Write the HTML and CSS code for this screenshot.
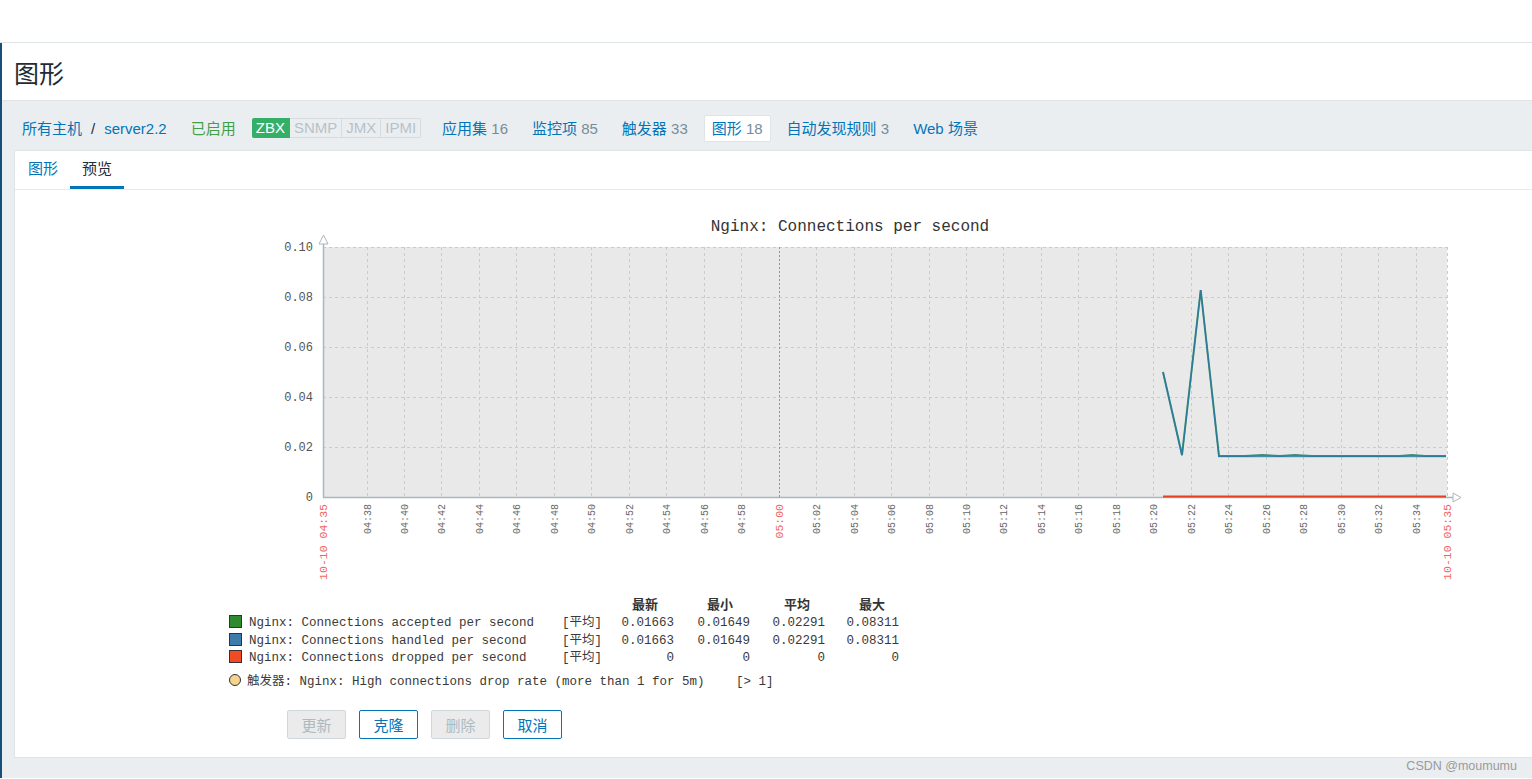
FILE: index.html
```html
<!DOCTYPE html>
<html lang="zh-CN">
<head>
<meta charset="utf-8">
<title>图形</title>
<link rel="stylesheet" href="styles.css">
</head>
<body>
<div class="topbar"></div>
<div class="main">
  <header class="page-header"><h1>图形</h1></header>
  <div class="content">
    <ul class="host-nav">
      <li class="crumbs"><a href="#">所有主机</a><span class="sep">/</span><a href="#">server2.2</a></li>
      <li class="status">已启用</li>
      <li class="badges"><span class="badge on">ZBX</span><span class="badge">SNMP</span><span class="badge">JMX</span><span class="badge">IPMI</span></li>
      <li><a href="#">应用集</a> <span class="count">16</span></li>
      <li><a href="#">监控项</a> <span class="count">85</span></li>
      <li><a href="#">触发器</a> <span class="count">33</span></li>
      <li class="selected"><a href="#">图形</a> <span class="count">18</span></li>
      <li><a href="#">自动发现规则</a> <span class="count">3</span></li>
      <li><a href="#">Web 场景</a></li>
    </ul>
    <div class="card">
      <ul class="tabs">
        <li><a href="#">图形</a></li>
        <li class="active"><a href="#">预览</a></li>
      </ul>
      <div class="graph">
        <svg class="chart" width="1260" height="500" viewBox="220 200 1260 500" xmlns="http://www.w3.org/2000/svg">
          <text class="c-title" x="850" y="231" text-anchor="middle">Nginx: Connections per second</text>
          <rect x="323" y="247" width="1124" height="250" fill="#e9e9e9"/>
          <g class="grid">
            <line x1="323" y1="247.5" x2="1447" y2="247.5"/>
            <line x1="323" y1="297.5" x2="1447" y2="297.5"/>
            <line x1="323" y1="347.5" x2="1447" y2="347.5"/>
            <line x1="323" y1="397.5" x2="1447" y2="397.5"/>
            <line x1="323" y1="447.5" x2="1447" y2="447.5"/>
            <line x1="367.5" y1="247" x2="367.5" y2="497"/>
            <line x1="404.5" y1="247" x2="404.5" y2="497"/>
            <line x1="441.5" y1="247" x2="441.5" y2="497"/>
            <line x1="479.5" y1="247" x2="479.5" y2="497"/>
            <line x1="516.5" y1="247" x2="516.5" y2="497"/>
            <line x1="554.5" y1="247" x2="554.5" y2="497"/>
            <line x1="591.5" y1="247" x2="591.5" y2="497"/>
            <line x1="629.5" y1="247" x2="629.5" y2="497"/>
            <line x1="666.5" y1="247" x2="666.5" y2="497"/>
            <line x1="704.5" y1="247" x2="704.5" y2="497"/>
            <line x1="741.5" y1="247" x2="741.5" y2="497"/>
            <line x1="816.5" y1="247" x2="816.5" y2="497"/>
            <line x1="854.5" y1="247" x2="854.5" y2="497"/>
            <line x1="891.5" y1="247" x2="891.5" y2="497"/>
            <line x1="929.5" y1="247" x2="929.5" y2="497"/>
            <line x1="966.5" y1="247" x2="966.5" y2="497"/>
            <line x1="1003.5" y1="247" x2="1003.5" y2="497"/>
            <line x1="1041.5" y1="247" x2="1041.5" y2="497"/>
            <line x1="1078.5" y1="247" x2="1078.5" y2="497"/>
            <line x1="1116.5" y1="247" x2="1116.5" y2="497"/>
            <line x1="1153.5" y1="247" x2="1153.5" y2="497"/>
            <line x1="1191.5" y1="247" x2="1191.5" y2="497"/>
            <line x1="1228.5" y1="247" x2="1228.5" y2="497"/>
            <line x1="1266.5" y1="247" x2="1266.5" y2="497"/>
            <line x1="1303.5" y1="247" x2="1303.5" y2="497"/>
            <line x1="1341.5" y1="247" x2="1341.5" y2="497"/>
            <line x1="1378.5" y1="247" x2="1378.5" y2="497"/>
            <line x1="1416.5" y1="247" x2="1416.5" y2="497"/>
            <line x1="1447.5" y1="247" x2="1447.5" y2="497"/>
          </g>
          <line class="grid-major" x1="779.5" y1="247" x2="779.5" y2="497"/>
          <g class="axis">
            <line x1="323.5" y1="240" x2="323.5" y2="497.5"/>
            <line x1="323" y1="497.5" x2="1454" y2="497.5"/>
            <polygon points="319,244 328,244 323.5,235" fill="#fff"/>
            <polygon points="1453,493 1453,502 1461,497.5" fill="#fff"/>
          </g>
          <g class="y-labels">
            <text x="313" y="251">0.10</text>
            <text x="313" y="301">0.08</text>
            <text x="313" y="351">0.06</text>
            <text x="313" y="401">0.04</text>
            <text x="313" y="451">0.02</text>
            <text x="313" y="501">0</text>
          </g>
          <g class="x-labels">
            <text transform="translate(371,504) rotate(-90)">04:38</text>
            <text transform="translate(408,504) rotate(-90)">04:40</text>
            <text transform="translate(445,504) rotate(-90)">04:42</text>
            <text transform="translate(483,504) rotate(-90)">04:44</text>
            <text transform="translate(520,504) rotate(-90)">04:46</text>
            <text transform="translate(558,504) rotate(-90)">04:48</text>
            <text transform="translate(595,504) rotate(-90)">04:50</text>
            <text transform="translate(633,504) rotate(-90)">04:52</text>
            <text transform="translate(670,504) rotate(-90)">04:54</text>
            <text transform="translate(708,504) rotate(-90)">04:56</text>
            <text transform="translate(745,504) rotate(-90)">04:58</text>
            <text transform="translate(820,504) rotate(-90)">05:02</text>
            <text transform="translate(858,504) rotate(-90)">05:04</text>
            <text transform="translate(895,504) rotate(-90)">05:06</text>
            <text transform="translate(933,504) rotate(-90)">05:08</text>
            <text transform="translate(970,504) rotate(-90)">05:10</text>
            <text transform="translate(1007,504) rotate(-90)">05:12</text>
            <text transform="translate(1045,504) rotate(-90)">05:14</text>
            <text transform="translate(1082,504) rotate(-90)">05:16</text>
            <text transform="translate(1120,504) rotate(-90)">05:18</text>
            <text transform="translate(1157,504) rotate(-90)">05:20</text>
            <text transform="translate(1195,504) rotate(-90)">05:22</text>
            <text transform="translate(1232,504) rotate(-90)">05:24</text>
            <text transform="translate(1270,504) rotate(-90)">05:26</text>
            <text transform="translate(1307,504) rotate(-90)">05:28</text>
            <text transform="translate(1345,504) rotate(-90)">05:30</text>
            <text transform="translate(1382,504) rotate(-90)">05:32</text>
            <text transform="translate(1420,504) rotate(-90)">05:34</text>
          </g>
          <g class="x-labels-red">
            <text transform="translate(327,504) rotate(-90)">10-10 04:35</text>
            <text transform="translate(783,504) rotate(-90)">05:00</text>
            <text transform="translate(1451,504) rotate(-90)">10-10 05:35</text>
          </g>
          <polyline class="line-red" points="1163,496.5 1446,496.5"/>
          <polyline class="line-green" points="1163,372 1182,455 1200.7,290 1219,456 1245,456 1262,455 1280,456 1295,455 1312,456 1400,456 1412,455 1425,456 1446,456"/>
          <polyline class="line-blue" points="1163,372 1182,455.5 1200.7,290 1219,456.5 1446,456.5"/>

          <g class="legend-head">
            <text x="645" y="609">最新</text>
            <text x="720" y="609">最小</text>
            <text x="797" y="609">平均</text>
            <text x="872" y="609">最大</text>
          </g>
          <rect class="sw" x="229.5" y="615.5" width="12" height="12" fill="#2d8a2e"/>
          <rect class="sw" x="229.5" y="633.5" width="12" height="12" fill="#3c7baa"/>
          <rect class="sw" x="229.5" y="650.5" width="12" height="12" fill="#f24a22"/>
          <g class="legend">
            <text x="249" y="626">Nginx: Connections accepted per second</text>
            <text x="249" y="644">Nginx: Connections handled per second</text>
            <text x="249" y="661">Nginx: Connections dropped per second</text>
            <text x="562" y="626">[平均]</text>
            <text x="562" y="644">[平均]</text>
            <text x="562" y="661">[平均]</text>
            <text x="247" y="685">触发器: Nginx: High connections drop rate (more than 1 for 5m)</text>
            <text x="736" y="685">[&gt; 1]</text>
          </g>
          <g class="legend num">
            <text x="674" y="626">0.01663</text>
            <text x="750" y="626">0.01649</text>
            <text x="825" y="626">0.02291</text>
            <text x="899" y="626">0.08311</text>
            <text x="674" y="644">0.01663</text>
            <text x="750" y="644">0.01649</text>
            <text x="825" y="644">0.02291</text>
            <text x="899" y="644">0.08311</text>
            <text x="674" y="661">0</text>
            <text x="750" y="661">0</text>
            <text x="825" y="661">0</text>
            <text x="899" y="661">0</text>
          </g>
          <circle cx="235" cy="680" r="5.5" fill="#f7d390" stroke="#333" stroke-width="1"/>
        </svg>
      </div>
      <div class="buttons">
        <button class="btn" disabled>更新</button>
        <button class="btn">克隆</button>
        <button class="btn" disabled>删除</button>
        <button class="btn">取消</button>
      </div>
    </div>
  </div>
</div>
<div class="watermark">CSDN @moumumu</div>
</body>
</html>
```
FILE: styles.css
```css
html, body {
  margin: 0;
  padding: 0;
}
body {
  font-family: "Liberation Sans", "Noto Sans CJK SC", sans-serif;
  font-size: 15px;
  color: #1f2c33;
  background: #fff;
  position: relative;
  height: 779px;
  overflow: hidden;
}
a {
  color: #0275b8;
  text-decoration: none;
}
.topbar {
  height: 42px;
  border-bottom: 1px solid #dfe4e7;
}
.main {
  border-left: 2px solid #16507a;
}
.page-header {
  height: 57px;
  display: flex;
  align-items: center;
  padding-left: 12px;
  border-bottom: 1px solid #dfe4e7;
}
.page-header h1 {
  margin: 0;
  font-size: 25px;
  font-weight: normal;
  color: #1f2c33;
}
.content {
  background: #ebeef0;
  padding: 0 0 20px 12px;
}
.host-nav {
  list-style: none;
  margin: 0;
  padding: 5px 0 0;
  height: 44px;
  display: flex;
  align-items: center;
  gap: 8px;
}
.host-nav li {
  padding: 0 8px;
  white-space: nowrap;
  line-height: 25px;
}
.host-nav .sep {
  color: #1f2c33;
  margin: 0 9px;
}
.host-nav .status {
  color: #429e47;
}
.host-nav .badges {
  display: flex;
  padding: 0 5px 0 0;
}
.badge {
  display: inline-block;
  font-size: 15px;
  line-height: 18px;
  padding: 0 4px;
  color: #b6c2c8;
  border: 1px solid #d5dbdf;
  border-left: none;
}
.badge.on {
  background: #34af67;
  border-color: #34af67;
  color: #fff;
  border-radius: 2px 0 0 2px;
}
.badge:last-child {
  border-radius: 0 2px 2px 0;
}
.count {
  color: #768d99;
}
.host-nav .selected {
  background: #fff;
  border: 1px solid #dfe4e7;
  border-radius: 2px;
  padding: 0 7px;
}
.card {
  background: #fff;
  border: 1px solid #dfe4e7;
  border-right: none;
  padding-bottom: 18px;
}
.tabs {
  list-style: none;
  margin: 0;
  padding: 0 0 0 1px;
  display: flex;
  border-bottom: 1px solid #e8ebed;
}
.tabs li a {
  display: block;
  padding: 0 12px;
  height: 35px;
  line-height: 35px;
  border-bottom: 3px solid transparent;
}
.tabs li.active a {
  color: #1f2c33;
  border-bottom-color: #0275b8;
}
.graph {
  margin: 10px 0 0 205px;
  height: 500px;
}
.chart {
  display: block;
}
.c-title {
  font-family: "Liberation Mono", monospace;
  font-size: 16px;
  fill: #333;
}
.grid line {
  stroke: #c4cdd1;
  stroke-width: 1;
  stroke-dasharray: 3 3;
}
.grid-major {
  stroke: #8c9599;
  stroke-width: 1;
  stroke-dasharray: 2 2;
}
.axis line {
  stroke: #a9b8bf;
  stroke-width: 1.5;
}
.axis polygon {
  stroke: #a9b8bf;
  stroke-width: 1;
}
.y-labels text {
  font-family: "Liberation Mono", monospace;
  font-size: 12px;
  fill: #555;
  text-anchor: end;
}
.x-labels text {
  font-family: "Liberation Mono", monospace;
  font-size: 10px;
  fill: #666;
  text-anchor: end;
}
.x-labels-red text {
  font-family: "Liberation Mono", monospace;
  font-size: 11.5px;
  fill: #f06464;
  text-anchor: end;
}
.line-red {
  fill: none;
  stroke: #e8401c;
  stroke-width: 2;
}
.line-green {
  fill: none;
  stroke: #3e8f7a;
  stroke-width: 2;
}
.line-blue {
  fill: none;
  stroke: #2774a4;
  stroke-width: 1.3;
  opacity: 0.75;
}
.legend-head text {
  font-family: "Noto Sans CJK SC", sans-serif;
  font-size: 13px;
  font-weight: bold;
  fill: #333;
  text-anchor: middle;
}
.legend text {
  font-family: "Liberation Mono", "Noto Sans CJK SC", monospace;
  font-size: 12.5px;
  fill: #3a3a3a;
}
.legend.num text {
  text-anchor: end;
}
.sw {
  stroke: #333;
  stroke-width: 1;
}
.buttons {
  margin: 10px 0 0 272px;
  display: flex;
  gap: 13px;
}
.btn {
  width: 59px;
  height: 29px;
  font-family: "Liberation Sans", "Noto Sans CJK SC", sans-serif;
  font-size: 15px;
  color: #0275b8;
  background: #fff;
  border: 1px solid #0275b8;
  border-radius: 2px;
  padding: 0;
}
.btn:disabled {
  color: #acbbc2;
  background: #ebebeb;
  border-color: #d0d7db;
}
.watermark {
  position: absolute;
  right: 15px;
  bottom: 6px;
  font-family: "Liberation Sans", sans-serif;
  font-size: 12.5px;
  color: #9a9a9a;
}
```
